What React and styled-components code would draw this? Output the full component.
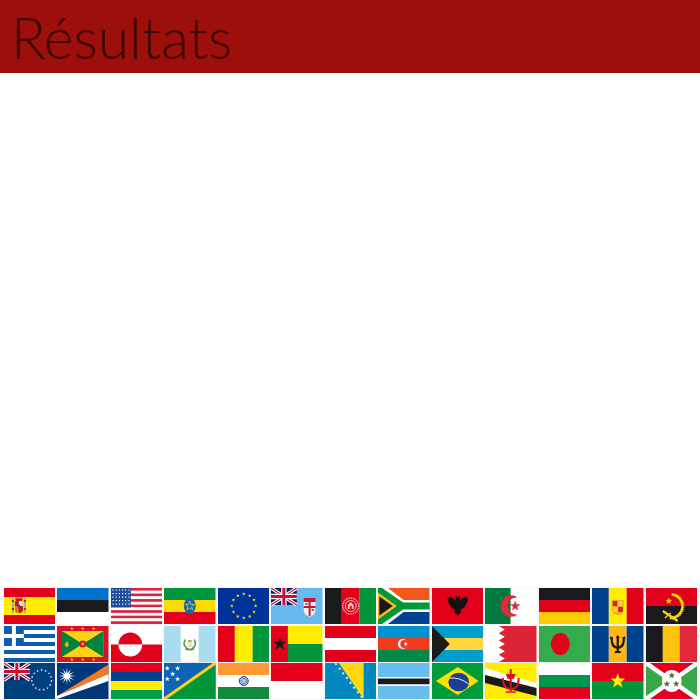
import React from 'react';
import styled, { createGlobalStyle } from 'styled-components';

const GlobalStyle = createGlobalStyle`
  html, body {
    margin: 0;
    padding: 0;
    background: #fff;
  }
`;

const Page = styled.div`
  display: flex;
  flex-direction: column;
  justify-content: space-between;
  height: 700px;
  overflow: hidden;
`;

const Header = styled.header`
  background: #9c0f0b;
  height: 73px;
  padding-left: 11px;
`;

const Title = styled.h1`
  margin: 0;
  font-family: Lato, sans-serif;
  font-weight: 300;
  font-size: 57px;
  line-height: 75px;
  color: #3d0403;
`;

const FlagGrid = styled.div`
  display: grid;
  grid-template-columns: repeat(13, 51.5px);
  grid-auto-rows: 36px;
  column-gap: 2px;
  row-gap: 1.5px;
  padding: 0 0 1px 3.8px;
`;

const FlagSvg = styled.svg`
  display: block;
  width: 51.5px;
  height: 36px;
  box-shadow: 0 0 1px rgba(120, 130, 150, 0.35);
`;

const Flag = ({ children }) => (
  <FlagSvg viewBox="0 0 52 36" preserveAspectRatio="none">
    {children}
  </FlagSvg>
);

// bandes horizontales : [couleur, hauteur]
const HBands = ({ bands }) => {
  let y = 0;
  return bands.map(([c, h], i) => {
    const r = <rect key={i} x="0" y={y} width="52" height={h} fill={c} />;
    y += h;
    return r;
  });
};

const VBands = ({ bands }) => {
  let x = 0;
  return bands.map(([c, w], i) => {
    const r = <rect key={i} x={x} y="0" width={w} height="36" fill={c} />;
    x += w;
    return r;
  });
};

const RED = '#e3001b';
const GREEN = '#009639';
const BLUE = '#00418f';
const YELLOW = '#ffec00';
const BLACK = '#1a1a1c';

const Star = ({ x, y, r, fill, stroke, inner = 0.4, points = 5 }) => {
  const pts = [];
  for (let i = 0; i < points * 2; i++) {
    const a = (Math.PI / points) * i - Math.PI / 2;
    const d = i % 2 ? r * inner : r;
    pts.push(`${x + d * Math.cos(a)},${y + d * Math.sin(a)}`);
  }
  return <polygon points={pts.join(' ')} fill={fill} stroke={stroke} strokeWidth={stroke ? 0.8 : 0} />;
};

const UnionJack = () => (
  <g>
    <rect width="26" height="17" fill="#012169" />
    <path d="M0 0 26 17M26 0 0 17" stroke="#fff" strokeWidth="3.4" />
    <path d="M0 0 26 17M26 0 0 17" stroke="#c8102e" strokeWidth="1.2" />
    <path d="M13 0V17M0 8.5H26" stroke="#fff" strokeWidth="5.4" />
    <path d="M13 0V17M0 8.5H26" stroke="#c8102e" strokeWidth="3" />
  </g>
);

const Ring = ({ x, y, r, n, size, fill }) =>
  Array.from({ length: n }).map((_, i) => {
    const a = (2 * Math.PI * i) / n;
    return <Star key={i} x={x + r * Math.sin(a)} y={y - r * Math.cos(a)} r={size} fill={fill} />;
  });

const flags = [
  // es
  <>
    <HBands bands={[[RED, 9], [YELLOW, 18], [RED, 9]]} />
    <path d="M8 10h2v15H8zM20 10h2v15h-2z" fill="#a9a99a" />
    <path d="M8 12h2v2H8zM20 12h2v2h-2zM8 20h2v2H8zM20 20h2v2h-2z" fill="#c8102e" />
    <path d="M11 10h8l-1 3h-6z" fill="#c8102e" />
    <path d="M11 9h8v1.5h-8z" fill="#d9a520" />
    <path d="M11 13h8v9q0 3-4 3t-4-3z" fill="#d9722c" />
    <path d="M11 13h4v5h-4zM15 18h4v5q-2 2-4 2z" fill="#c8102e" />
    <path d="M15 13h4v5h-4z" fill="#f3ead0" />
    <circle cx="15" cy="18" r="1.4" fill="#1f4a9c" />
  </>,
  // ee
  <HBands bands={[['#0072ce', 12], [BLACK, 12], ['#fff', 12]]} />,
  // us
  <>
    <HBands
      bands={Array.from({ length: 13 }).map((_, i) => [i % 2 ? '#fff' : '#e0203f', 36 / 13])}
    />
    <rect width="20" height="19.4" fill="#1f4a9c" />
    {Array.from({ length: 30 }).map((_, i) => (
      <rect key={i} x={1.5 + (i % 6) * 3.2} y={1.5 + Math.floor(i / 6) * 3.5} width="1.2" height="1.2" fill="#fff" />
    ))}
  </>,
  // et
  <>
    <HBands bands={[[GREEN, 12], ['#ffdc00', 12], [RED, 12]]} />
    <ellipse cx="26" cy="18" rx="6" ry="8" fill="#1467b3" />
    <Star x={26} y={18} r={5} fill="none" stroke="#e6cf1a" />
  </>,
  // eu
  <>
    <rect width="52" height="36" fill="#003399" />
    <Ring x={26} y={18} r={12} n={12} size={2} fill="#ffcc00" />
  </>,
  // fj
  <>
    <rect width="52" height="36" fill="#68b9ee" />
    <UnionJack />
    <path d="M33 10H45V22Q45 27 39 29Q33 27 33 22Z" fill="#f4f4f4" stroke="#b8b090" strokeWidth="0.5" />
    <rect x="33" y="10" width="12" height="4" fill="#d21034" />
    <rect x="38" y="14" width="2" height="14" fill="#d21034" />
    <rect x="33" y="18" width="12" height="2" fill="#d21034" />
    <path d="M34.5 15h2.5v2h-2.500zM41 21h2.5v2H41z" fill="#5a8a3a" />
  </>,
  // af
  <>
    <VBands bands={[[BLACK, 17], [RED, 18], [GREEN, 17]]} />
    <circle cx="26" cy="18" r="8" fill="none" stroke="#f7c4c4" strokeWidth="1.5" strokeDasharray="1 0.8" />
    <circle cx="26" cy="18" r="5.5" fill="none" stroke="#f7c4c4" strokeWidth="1" />
    <path d="M23 21v-4l3-3 3 3v4z" fill="#f7c4c4" />
    <path d="M25 21v-3h2v3z" fill={RED} />
  </>,
  // za
  <>
    <rect width="52" height="18" fill="#f1581a" />
    <rect y="18" width="52" height="18" fill={BLUE} />
    <path d="M0 0 24 18H52M0 36 24 18" stroke="#fff" strokeWidth="12" fill="none" />
    <path d="M-2 0 24 18H52M-2 36 24 18" stroke={GREEN} strokeWidth="7" fill="none" />
    <path d="M0 6 17 18 0 30Z" fill={BLACK} stroke="#ffb81c" strokeWidth="2.5" />
  </>,
  // al
  <>
    <rect width="52" height="36" fill={RED} />
    <path
      d="M24.5 7.500 26 10l1.500-2.500L29 9l-1.500 1.500 0 3 2-1.500L30 9.500l2 1 .5-2 1 1.500 1.500-1.500.5 2.500 1-.5-.5 3-1 0 .5 2-1.500 0 .5 2-1.500 0 0 2-1.500-.5-.5 1.500-2-1-1 2 2 3-1.500 0-.5 2-1-1-1 3-1-3-1 1-.5-2-1.500 0 2-3-1-2-2 1-.5-1.500-1.500.5 0-2-1.500 0 .5-2-1.500 0 .5-2-1 0-.5-3 1 .5.5-2.500 1.500 1.500 1-1.500.5 2 2-1 .5 2.500 2 1.500 0-3L23 9z"
      fill="#111"
    />
    <path d="M18 11 24 14V22L20 20ZM34 11 28 14V22L32 20Z" fill="#111" />
    <rect x="23.5" y="11" width="5" height="13" fill="#111" />
  </>,
  // dz
  <>
    <VBands bands={[['#007a3d', 26], ['#fff', 26]]} />
    <path d="M33 9.500A10.800 10.800 0 1 0 33 26.500A8.600 8.600 0 1 1 33 9.500Z" fill="#e0283e" />
    <Star x={30.5} y={18} r={5.5} fill="#e0283e" />
  </>,
  // de
  <HBands bands={[[BLACK, 12], [RED, 12], ['#ffcc00', 12]]} />,
  // ad
  <>
    <VBands bands={[[BLUE, 17], [YELLOW, 18], [RED, 17]]} />
    <path d="M20 12h12v10q0 4-6 5-6-1-6-5z" fill="#f5a623" />
    <rect x="21" y="13" width="4.5" height="5" fill="#d2232a" />
    <rect x="26.5" y="13" width="4.5" height="5" fill="#ffd23f" />
    <rect x="21" y="19" width="4.5" height="5" fill="#ffd23f" />
    <rect x="26.5" y="19" width="4.5" height="5" fill="#d2232a" />
  </>,
  // ao
  <>
    <HBands bands={[[RED, 18], [BLACK, 18]]} />
    <path d="M26 6.500A11 11 0 0 1 24 30" fill="none" stroke="#ffd400" strokeWidth="2.4" />
    <path d="M26 5.500A12.300 12.300 0 0 1 25 31" fill="none" stroke="#ffd400" strokeWidth="1.2" strokeDasharray="1 1.2" />
    <Star x={23} y={13} r={3.6} fill="#ffd400" />
    <path d="M17 23 32 33" stroke="#ffd400" strokeWidth="2.2" />
    <path d="M19 30 25 25" stroke="#ffd400" strokeWidth="1.4" />
  </>,

  // gr
  <>
    <HBands
      bands={Array.from({ length: 9 }).map((_, i) => [i % 2 ? '#fff' : '#0d5eaf', 4])}
    />
    <rect width="20" height="20" fill="#0d5eaf" />
    <rect x="8" width="4" height="20" fill="#fff" />
    <rect y="8" width="20" height="4" fill="#fff" />
  </>,
  // gd
  <>
    <rect width="52" height="36" fill="#d9102a" />
    <rect x="5" y="5" width="42" height="26" fill="#fcd116" />
    <path d="M5 5 26 18 5 31ZM47 5 26 18 47 31Z" fill="#00843d" />
    <circle cx="26" cy="18" r="3.5" fill="#d9102a" />
    <path d="M10 15q3 3 1 6-4 0-3-3z" fill="#f5a623" />
    <Star x={26} y={18} r={2.2} fill="#fcd116" />
    {[15, 26, 37].map((x) => (
      <React.Fragment key={x}>
        <Star x={x} y={2.5} r={1.8} fill="#fcd116" />
        <Star x={x} y={33.5} r={1.8} fill="#fcd116" />
      </React.Fragment>
    ))}
  </>,
  // gl
  <>
    <HBands bands={[['#fff', 18.5], [RED, 17.5]]} />
    <path d="M7.500 18.500a12 12 0 0 1 24 0z" fill={RED} />
    <path d="M7.500 18.500a12 12 0 0 0 24 0z" fill="#fff" />
  </>,
  // gt
  <>
    <VBands bands={[['#a9dcf0', 17], ['#fff', 18], ['#a9dcf0', 17]]} />
    <path d="M21.500 13.500a6.500 6.500 0 0 0 9 9M30.500 13.500a6.500 6.500 0 0 1-9 9" fill="none" stroke="#5a9a4a" strokeWidth="1.6" />
    <rect x="24" y="14" width="4" height="7" fill="#e9e3b0" />
    <path d="M24 15h4" stroke="#7a7a50" strokeWidth="1" />
  </>,
  // gn
  <VBands bands={[[RED, 17], [YELLOW, 18], [GREEN, 17]]} />,
  // gw
  <>
    <HBands bands={[[YELLOW, 18], [GREEN, 18]]} />
    <rect width="17" height="36" fill={RED} />
    <Star x={9} y={18} r={7} fill={BLACK} />
  </>,
  // at
  <HBands bands={[[RED, 12], ['#fff', 12], [RED, 12]]} />,
  // az
  <>
    <HBands bands={[['#0092cf', 12], ['#ef3a1d', 12], ['#008a4a', 12]]} />
    <circle cx="25" cy="18" r="5" fill="#fff" />
    <circle cx="26.5" cy="18" r="4" fill="#ef3a1d" />
    <Star x={28} y={18} r={2.4} fill="#fff" />
  </>,
  // bs
  <>
    <HBands bands={[['#009ccb', 12], ['#ffd63f', 12], ['#009ccb', 12]]} />
    <path d="M0 0 18 18 0 36z" fill={BLACK} />
  </>,
  // bh
  <>
    <rect width="52" height="36" fill="#dd2436" />
    <path
      d="M0 0H14L20 3.600 14 7.200 20 10.800 14 14.400 20 18 14 21.600 20 25.200 14 28.800 20 32.400 14 36H0Z"
      fill="#fff"
    />
  </>,
  // bd
  <>
    <rect width="52" height="36" fill="#36ab4b" />
    <ellipse cx="21.5" cy="18" rx="9.5" ry="11" fill={RED} />
  </>,
  // bb
  <>
    <VBands bands={[[BLUE, 17], ['#ffb612', 18], [BLUE, 17]]} />
    <path
      d="M26 10v16M20 11q-1 10 6 11q7-1 6-11M23 26h6"
      fill="none"
      stroke={BLACK}
      strokeWidth="2.2"
    />
    <path d="M26 9l-2 3h4zM19 10l-1 3 3-.5zM33 10l1 3-3-.5z" fill={BLACK} />
  </>,
  // be
  <VBands bands={[[BLACK, 17], ['#ffc20e', 17], ['#e3283d', 18]]} />,

  // ck
  <>
    <rect width="52" height="36" fill="#00407f" />
    <UnionJack />
    <Ring x={38} y={17} r={10} n={15} size={1.3} fill="#fff" />
  </>,
  // mh
  <>
    <rect width="52" height="36" fill="#00377b" />
    <path d="M0 33 52 1.500V11Z" fill="#f47a20" />
    <path d="M0 33 52 11V18L0 36Z" fill="#fff" />
    <Star x={10} y={13} r={8.5} inner={0.32} points={12} fill="#fff" />
  </>,
  // mu
  <HBands bands={[[RED, 9], [BLUE, 9], [YELLOW, 9], ['#00a04a', 9]]} />,
  // sb
  <>
    <rect width="52" height="36" fill="#0d63b5" />
    <path d="M0 36H52V0Z" fill="#009639" />
    <path d="M0 36 52 0" stroke="#fcd116" strokeWidth="3" />
    {[[3.3, 5.3], [13.7, 5.3], [8.7, 11], [3.3, 16], [13.7, 16]].map(([x, y]) => (
      <Star key={`${x}-${y}`} x={x} y={y} r={2.8} fill="#fff" />
    ))}
  </>,
  // in
  <>
    <HBands bands={[['#ff9933', 12], ['#fff', 12], ['#138a3c', 12]]} />
    <circle cx="26" cy="18" r="4.5" fill="#b6c4e2" stroke="#0b3a94" strokeWidth="1" />
    <circle cx="26" cy="18" r="2.6" fill="none" stroke="#0b3a94" strokeWidth="1" strokeDasharray="0.8 0.8" />
  </>,
  // id
  <HBands bands={[[RED, 18], ['#fff', 18]]} />,
  // ba
  <>
    <rect width="52" height="36" fill="#0088bf" />
    <path d="M14 0H39V36Z" fill="#ffd80d" />
    {Array.from({ length: 8 }).map((_, i) => (
      <Star key={i} x={11 + i * 3.7} y={1 + i * 4.7} r={1.7} fill="#fff" />
    ))}
  </>,
  // bw
  <HBands bands={[['#69bdee', 14], ['#fff', 1.5], [BLACK, 6], ['#fff', 1.5], ['#69bdee', 13]]} />,
  // br
  <>
    <rect width="52" height="36" fill="#009b3a" />
    <path d="M26 4 47 18 26 32 4 18Z" fill="#fedf00" />
    <ellipse cx="27" cy="19" rx="10.5" ry="9.2" fill="#1a3f95" />
    <path d="M17 15Q28 14 37 21" stroke="#e8f0e8" strokeWidth="1" fill="none" />
  </>,
  // bn
  <>
    <rect width="52" height="36" fill={YELLOW} />
    <path d="M0 5 52 20V25L0 12Z" fill="#fff" />
    <path d="M0 12 52 25V33L0 20Z" fill={BLACK} />
    <path d="M26 6v22" stroke="#d9102a" strokeWidth="2" />
    <path d="M18 15q0 11 8 11q8 0 8-11" fill="none" stroke="#d9102a" strokeWidth="2" />
    <path d="M21 11h10l-2 5h-6z" fill="#d9102a" />
    <path d="M21 29h10" stroke="#d9102a" strokeWidth="1.5" />
  </>,
  // bg
  <HBands bands={[['#fff', 12], ['#00964b', 12], [RED, 12]]} />,
  // bf
  <>
    <HBands bands={[[RED, 18], [GREEN, 18]]} />
    <Star x={26} y={18} r={8} fill={YELLOW} />
  </>,
  // bi
  <>
    <rect width="52" height="36" fill="#36a84a" />
    <path d="M0 0H52L26 18Z" fill={RED} />
    <path d="M0 36H52L26 18Z" fill={RED} />
    <path d="M0 0 52 36M52 0 0 36" stroke="#fff" strokeWidth="4.5" />
    <ellipse cx="26" cy="18" rx="10" ry="11" fill="#fff" />
    <Star x={26} y={12.5} r={2.8} fill={RED} stroke="#36a84a" />
    <Star x={21} y={21} r={2.8} fill={RED} stroke="#36a84a" />
    <Star x={30.5} y={21} r={2.8} fill={RED} stroke="#36a84a" />
  </>,
];

export default function App() {
  return (
    <>
      <GlobalStyle />
      <Page>
        <Header>
          <Title>Résultats</Title>
        </Header>
        <FlagGrid>
          {flags.map((f, i) => (
            <Flag key={i}>{f}</Flag>
          ))}
        </FlagGrid>
      </Page>
    </>
  );
}
